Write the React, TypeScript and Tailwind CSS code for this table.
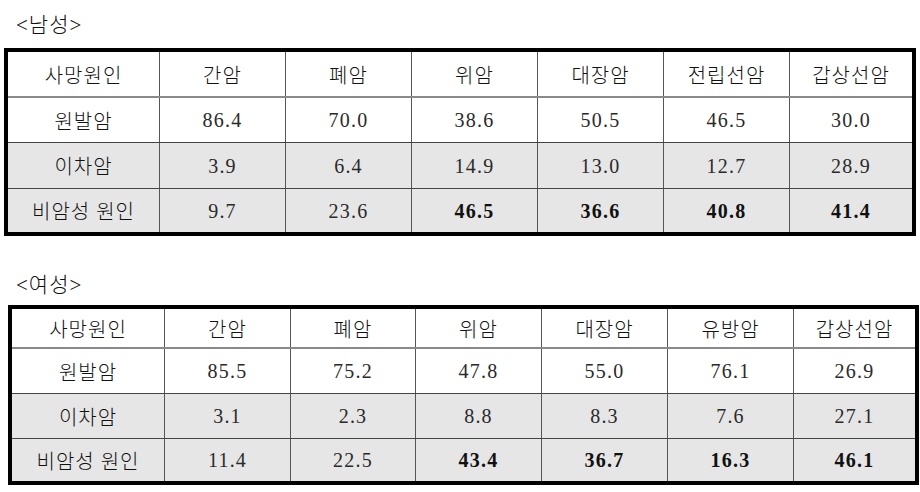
import React from "react";

type Row = { label: string; values: string[]; bold?: boolean[]; shaded?: boolean; h: string; line: string };

const font = { fontFamily: '"Liberation Serif", "Noto Sans CJK KR", serif' };

function Table({
  headers,
  rows,
  cols,
  headH,
  className,
}: {
  headers: string[];
  rows: Row[];
  cols: string;
  headH: string;
  className: string;
}) {
  return (
    <div className={`border-[4px] border-black ${className}`}>
      {/* header row */}
      <div className={`grid ${cols} ${headH} bg-white`}>
        {["사망원인", ...headers].map((h, i) => (
          <div
            key={h}
            className={`flex items-center justify-center pt-[3px] text-[20px] tracking-[1px] font-light text-[#111] ${i > 0 ? "border-l border-[#555]" : ""}`}
          >
            {h}
          </div>
        ))}
      </div>
      {rows.map((r) => (
        <div key={r.label} className={`grid ${cols} ${r.h} ${r.line} ${r.shaded ? "bg-[#e6e6e6]" : "bg-white"}`}>
          <div className="flex items-center justify-center pt-[3px] text-[20px] tracking-[1px] font-light text-[#111]">{r.label}</div>
          {r.values.map((v, i) => (
            <div
              key={i}
              className={`flex items-center justify-center border-l border-[#555] text-[20px] tracking-[1.2px] ${r.bold && r.bold[i] ? "font-bold text-[#111]" : "text-[#2a2a2a]"}`}
            >
              {v}
            </div>
          ))}
        </div>
      ))}
    </div>
  );
}

export default function App() {
  const bold = [false, false, true, true, true, true];
  return (
    <div className="w-[920px] h-[492px] bg-white overflow-hidden" style={font}>
      {/* 남성 */}
      <div className="h-[48px] pl-[16px] pt-[3px] flex items-center text-[21px] tracking-[1px] font-light text-[#111]">&lt;남성&gt;</div>
      <Table
        className="ml-[4px] w-[912px]"
        headers={["간암", "폐암", "위암", "대장암", "전립선암", "갑상선암"]}
        cols="grid-cols-[151px_126px_126px_126px_126px_126px_123px]"
        headH="h-[44px]"
        rows={[
          { label: "원발암", values: ["86.4", "70.0", "38.6", "50.5", "46.5", "30.0"], h: "h-[46px]", line: "border-t-2 border-[#8a8a8a]" },
          { label: "이차암", values: ["3.9", "6.4", "14.9", "13.0", "12.7", "28.9"], shaded: true, h: "h-[46px]", line: "border-t border-[#444]" },
          { label: "비암성 원인", values: ["9.7", "23.6", "46.5", "36.6", "40.8", "41.4"], bold, shaded: true, h: "h-[44px]", line: "border-t border-[#444]" },
        ]}
      />

      {/* 여성 */}
      <div className="h-[69px] pl-[16px] pt-[35px] text-[21px] tracking-[1px] leading-[28px] font-light text-[#111]">&lt;여성&gt;</div>
      <Table
        className="ml-[8px] w-[911px]"
        headers={["간암", "폐암", "위암", "대장암", "유방암", "갑상선암"]}
        cols="grid-cols-[152px_126px_125px_126px_126px_126px_122px]"
        headH="h-[38px]"
        rows={[
          { label: "원발암", values: ["85.5", "75.2", "47.8", "55.0", "76.1", "26.9"], h: "h-[46px]", line: "border-t-2 border-[#8a8a8a]" },
          { label: "이차암", values: ["3.1", "2.3", "8.8", "8.3", "7.6", "27.1"], shaded: true, h: "h-[45px]", line: "border-t border-[#444]" },
          { label: "비암성 원인", values: ["11.4", "22.5", "43.4", "36.7", "16.3", "46.1"], bold, shaded: true, h: "h-[43px]", line: "border-t border-[#444]" },
        ]}
      />
    </div>
  );
}
